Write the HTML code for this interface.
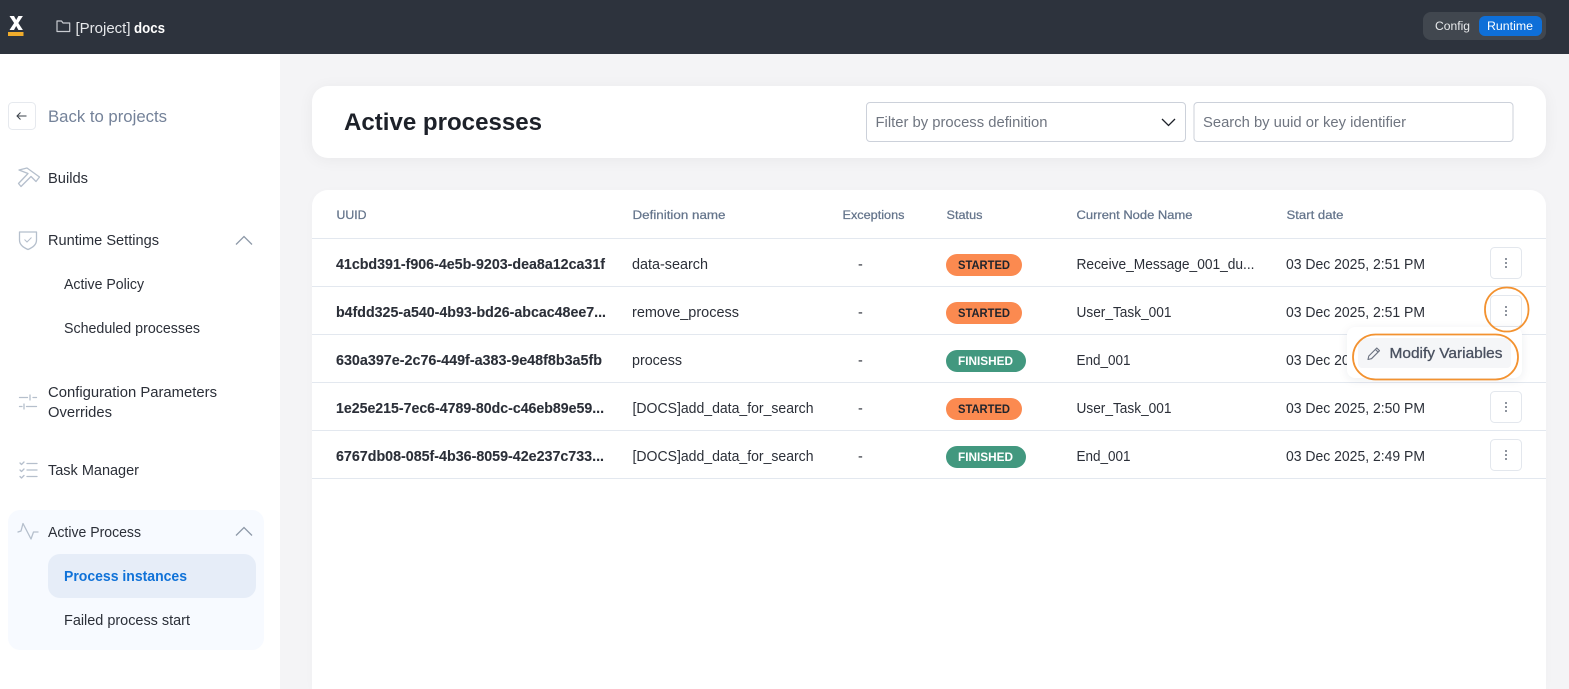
<!DOCTYPE html>
<html><head><meta charset="utf-8"><title>Active processes</title>
<style>
html,body{margin:0;padding:0;width:1569px;height:689px;overflow:hidden;background:#f4f4f6}
#w{position:absolute;left:0;top:0;width:1569px;height:689px;overflow:hidden;background:#f4f4f6}
.a{position:absolute;box-sizing:border-box}
svg{position:absolute;left:0;top:0}
text{font-family:"Liberation Sans",sans-serif;font-size:14.4px;fill:#2b2f38}
.b{font-weight:700}
.h{font-size:12.3px;fill:#64748b;stroke:#64748b;stroke-width:.25px}
.u{stroke:#2b2f38;stroke-width:.1px;font-weight:700}
.i{fill:none;stroke:#b5bfcc;stroke-width:1.3;stroke-linecap:round;stroke-linejoin:round}
</style></head><body>
<div id="w">
<div class="a" style="left:0;top:54px;width:280px;height:635px;background:#fff"></div>
<div class="a" style="left:0;top:0;width:1569px;height:54px;background:#2d333d"></div>
<div class="a" style="left:312px;top:86px;width:1234px;height:72px;background:#fff;border-radius:16px;box-shadow:0 2px 16px rgba(0,0,0,.05)"></div>
<div class="a" style="left:312px;top:190px;width:1234px;height:499px;background:#fff;border-radius:16px 16px 0 0;box-shadow:0 2px 12px rgba(0,0,0,.02)"></div>
<div class="a" style="left:1347px;top:327px;width:175px;height:51px;background:#fff;border-radius:8px;box-shadow:0 2px 10px rgba(30,40,60,.08);z-index:2"></div>
<svg width="1569" height="689" viewBox="0 0 1569 689" style="z-index:1">
<!-- top bar -->
<path d="M9.500 16h4.500l2.200 4 2.200-4h4.500l-4.600 7 4.600 7h-4.500l-2.200-4-2.200 4H9.500l4.600-7z" fill="#fff"/>
<rect x="8" y="32" width="15.500" height="4" fill="#f0ac2c"/>
<path d="M57 21h4.500l1.500 2h6.700v8.500H57z" fill="none" stroke="#c9ccd1" stroke-width="1.200" stroke-linejoin="round"/>
<text x="75.500" y="33" textLength="55" lengthAdjust="spacingAndGlyphs" style="fill:#e6e8eb">[Project]</text>
<text x="134" y="33" textLength="31" lengthAdjust="spacingAndGlyphs" class="b" style="fill:#fff">docs</text>
<rect x="1423" y="12" width="123" height="28" rx="8" fill="#41474f"/>
<rect x="1479" y="16" width="63" height="20" rx="6" fill="#0e6fd8"/>
<text x="1435" y="30" textLength="35" lengthAdjust="spacingAndGlyphs" style="font-size:12.3px;fill:#e8eaec">Config</text>
<text x="1487" y="30" textLength="46" lengthAdjust="spacingAndGlyphs" style="font-size:12.3px;fill:#fff">Runtime</text>
<!-- sidebar -->
<rect x="8.500" y="102.500" width="27" height="27" rx="4" fill="#fff" stroke="#e6e9ee"/>
<path d="M26.500 116H17M20.500 112.500L17 116l3.500 3.500" fill="none" stroke="#3a4049" stroke-width="1"/>
<text x="48" y="122" textLength="119" lengthAdjust="spacingAndGlyphs" style="font-size:16.400px;fill:#748299">Back to projects</text>
<path class="i" d="M19 170L27 168L39.500 177L36 181.500L31 176.500L21 186.500L18.500 183.500L28 173.500Z"/>
<text x="48" y="183" textLength="40" lengthAdjust="spacingAndGlyphs">Builds</text>
<path class="i" d="M19.500 232h17v8c0 5-4 7.500-8.500 9.500-4.500-2-8.500-4.500-8.500-9.500z"/>
<path d="M24.500 239.500l2.500 2.500 4.500-4.500" fill="none" stroke="#b5bfcc" stroke-width="1"/>
<text x="48" y="245" textLength="111" lengthAdjust="spacingAndGlyphs">Runtime Settings</text>
<path d="M236 244.500l8-8 8 8" fill="none" stroke="#8e99a8" stroke-width="1.300"/>
<text x="64" y="289" textLength="80" lengthAdjust="spacingAndGlyphs">Active Policy</text>
<text x="64" y="333" textLength="136" lengthAdjust="spacingAndGlyphs">Scheduled processes</text>
<path class="i" d="M19.500 397.500h8M30 395v5M33 397.500h3.500M19.500 406.500h2.500M24 404v5M26.500 406.500h10" stroke-width="1.100"/>
<text x="48" y="397" textLength="169" lengthAdjust="spacingAndGlyphs">Configuration Parameters</text>
<text x="48" y="417" textLength="64" lengthAdjust="spacingAndGlyphs">Overrides</text>
<path class="i" d="M20 463l1.500 1.500 2.500-2.500M20 470l1.500 1.500 2.500-2.500M20 476.500l1.500 1.500 2.500-2.500M27 463.500h10M27 470h10M27 476.500h10" stroke-width="1"/>
<text x="48" y="475" textLength="91" lengthAdjust="spacingAndGlyphs">Task Manager</text>
<rect x="8" y="510" width="256" height="140" rx="12" fill="#f7faff"/>
<path class="i" d="M18 532L21 531L23 523.500L31 539L33.500 532H38"/>
<text x="48" y="537" textLength="93" lengthAdjust="spacingAndGlyphs">Active Process</text>
<path d="M236 535.500l8-8 8 8" fill="none" stroke="#8e99a8" stroke-width="1.300"/>
<rect x="48" y="554" width="208" height="44" rx="12" fill="#e6edf8"/>
<text x="64" y="581" textLength="123" lengthAdjust="spacingAndGlyphs" class="b" style="fill:#1072d8">Process instances</text>
<text x="64" y="625" textLength="126" lengthAdjust="spacingAndGlyphs">Failed process start</text>
<!-- header card -->
<text x="344" y="130" textLength="198" lengthAdjust="spacingAndGlyphs" class="b" style="font-size:24.500px;fill:#1d2129">Active processes</text>
<rect x="866.500" y="102.500" width="319" height="39" rx="3.500" fill="#fff" stroke="#ccd1da"/>
<text x="875.500" y="127" textLength="172" lengthAdjust="spacingAndGlyphs" style="fill:#6f7580">Filter by process definition</text>
<path d="M1162 119l6.500 6.500 6.500-6.500" fill="none" stroke="#1d2129" stroke-width="1.300"/>
<rect x="1194" y="102.500" width="319" height="39" rx="3.500" fill="#fff" stroke="#ccd1da"/>
<text x="1203" y="127" textLength="203" lengthAdjust="spacingAndGlyphs" style="fill:#6f7580">Search by uuid or key identifier</text>
<!-- table header -->
<text class="h" x="336.500" y="219" textLength="30" lengthAdjust="spacingAndGlyphs">UUID</text>
<text class="h" x="632.500" y="219" textLength="93" lengthAdjust="spacingAndGlyphs">Definition name</text>
<text class="h" x="842.500" y="219" textLength="62" lengthAdjust="spacingAndGlyphs">Exceptions</text>
<text class="h" x="946.500" y="219" textLength="36" lengthAdjust="spacingAndGlyphs">Status</text>
<text class="h" x="1076.500" y="219" textLength="116" lengthAdjust="spacingAndGlyphs">Current Node Name</text>
<text class="h" x="1286.500" y="219" textLength="57" lengthAdjust="spacingAndGlyphs">Start date</text>
<g fill="#e3e8ef">
<rect x="312" y="238" width="1234" height="1"/><rect x="312" y="286" width="1234" height="1"/><rect x="312" y="334" width="1234" height="1"/><rect x="312" y="382" width="1234" height="1"/><rect x="312" y="430" width="1234" height="1"/><rect x="312" y="478" width="1234" height="1"/>
</g>
<!-- rows -->
<text class="u" x="336" y="269" textLength="269" lengthAdjust="spacingAndGlyphs">41cbd391-f906-4e5b-9203-dea8a12ca31f</text>
<text class="u" x="336" y="317" textLength="270" lengthAdjust="spacingAndGlyphs">b4fdd325-a540-4b93-bd26-abcac48ee7...</text>
<text class="u" x="336" y="365" textLength="266" lengthAdjust="spacingAndGlyphs">630a397e-2c76-449f-a383-9e48f8b3a5fb</text>
<text class="u" x="336" y="413" textLength="268" lengthAdjust="spacingAndGlyphs">1e25e215-7ec6-4789-80dc-c46eb89e59...</text>
<text class="u" x="336" y="461" textLength="268" lengthAdjust="spacingAndGlyphs">6767db08-085f-4b36-8059-42e237c733...</text>
<text x="632" y="269" textLength="76" lengthAdjust="spacingAndGlyphs">data-search</text>
<text x="632" y="317" textLength="107" lengthAdjust="spacingAndGlyphs">remove_process</text>
<text x="632" y="365" textLength="50" lengthAdjust="spacingAndGlyphs">process</text>
<text x="632.500" y="413" textLength="181" lengthAdjust="spacingAndGlyphs">[DOCS]add_data_for_search</text>
<text x="632.500" y="461" textLength="181" lengthAdjust="spacingAndGlyphs">[DOCS]add_data_for_search</text>
<text x="858" y="269">-</text><text x="858" y="317">-</text><text x="858" y="365">-</text><text x="858" y="413">-</text><text x="858" y="461">-</text>
<rect x="946" y="254" width="76" height="22" rx="11" fill="#fb8a50"/><text x="958" y="269" textLength="52" lengthAdjust="spacingAndGlyphs" class="b" style="font-size:12.300px;fill:#20242c">STARTED</text>
<rect x="946" y="302" width="76" height="22" rx="11" fill="#fb8a50"/><text x="958" y="317" textLength="52" lengthAdjust="spacingAndGlyphs" class="b" style="font-size:12.300px;fill:#20242c">STARTED</text>
<rect x="946" y="350" width="80" height="22" rx="11" fill="#42987f"/><text x="958" y="365" textLength="55" lengthAdjust="spacingAndGlyphs" class="b" style="font-size:12.300px;fill:#fff">FINISHED</text>
<rect x="946" y="398" width="76" height="22" rx="11" fill="#fb8a50"/><text x="958" y="413" textLength="52" lengthAdjust="spacingAndGlyphs" class="b" style="font-size:12.300px;fill:#20242c">STARTED</text>
<rect x="946" y="446" width="80" height="22" rx="11" fill="#42987f"/><text x="958" y="461" textLength="55" lengthAdjust="spacingAndGlyphs" class="b" style="font-size:12.300px;fill:#fff">FINISHED</text>
<text x="1076.500" y="269" textLength="178" lengthAdjust="spacingAndGlyphs">Receive_Message_001_du...</text>
<text x="1076.500" y="317" textLength="95" lengthAdjust="spacingAndGlyphs">User_Task_001</text>
<text x="1076.500" y="365" textLength="54" lengthAdjust="spacingAndGlyphs">End_001</text>
<text x="1076.500" y="413" textLength="95" lengthAdjust="spacingAndGlyphs">User_Task_001</text>
<text x="1076.500" y="461" textLength="54" lengthAdjust="spacingAndGlyphs">End_001</text>
<text x="1286" y="269" textLength="139" lengthAdjust="spacingAndGlyphs">03 Dec 2025, 2:51 PM</text>
<text x="1286" y="317" textLength="139" lengthAdjust="spacingAndGlyphs">03 Dec 2025, 2:51 PM</text>
<text x="1286" y="365" textLength="139" lengthAdjust="spacingAndGlyphs">03 Dec 2025, 2:50 PM</text>
<text x="1286" y="413" textLength="139" lengthAdjust="spacingAndGlyphs">03 Dec 2025, 2:50 PM</text>
<text x="1286" y="461" textLength="139" lengthAdjust="spacingAndGlyphs">03 Dec 2025, 2:49 PM</text>
<!-- buttons -->
<g fill="#fff" stroke="#e3e7ed">
<rect x="1490.500" y="247.500" width="31" height="31" rx="4"/><rect x="1490.500" y="295.500" width="31" height="31" rx="4"/><rect x="1490.500" y="391.500" width="31" height="31" rx="4"/><rect x="1490.500" y="439.500" width="31" height="31" rx="4"/>
</g>
<g fill="#6b7280">
<rect x="1505" y="258" width="2" height="2" rx="1"/><rect x="1505" y="262" width="2" height="2" rx="1"/><rect x="1505" y="266" width="2" height="2" rx="1"/>
<rect x="1505" y="306" width="2" height="2" rx="1"/><rect x="1505" y="310" width="2" height="2" rx="1"/><rect x="1505" y="314" width="2" height="2" rx="1"/>
<rect x="1505" y="402" width="2" height="2" rx="1"/><rect x="1505" y="406" width="2" height="2" rx="1"/><rect x="1505" y="410" width="2" height="2" rx="1"/>
<rect x="1505" y="450" width="2" height="2" rx="1"/><rect x="1505" y="454" width="2" height="2" rx="1"/><rect x="1505" y="458" width="2" height="2" rx="1"/>
</g>
</svg>
<svg width="1569" height="689" viewBox="0 0 1569 689" style="z-index:3">
<rect x="1358" y="338" width="153" height="30" rx="4" fill="#f5f6f8"/>
<path d="M1368 359.500l.8-3.500 8-8 2.700 2.700-8 8zM1375.500 349.500l2.700 2.700" fill="none" stroke="#6b7280" stroke-width="1.100" stroke-linejoin="round"/>
<text x="1389.500" y="358" textLength="113" lengthAdjust="spacingAndGlyphs" style="fill:#4a5160;stroke:#4a5160;stroke-width:.3px">Modify Variables</text>
<rect x="1485" y="287.500" width="43.500" height="44" rx="21.500" fill="none" stroke="#f39230" stroke-width="1.800"/>
<rect x="1353" y="334.500" width="165" height="45" rx="22.500" fill="none" stroke="#f39230" stroke-width="1.800"/>
</svg>
</div>
</body></html>
